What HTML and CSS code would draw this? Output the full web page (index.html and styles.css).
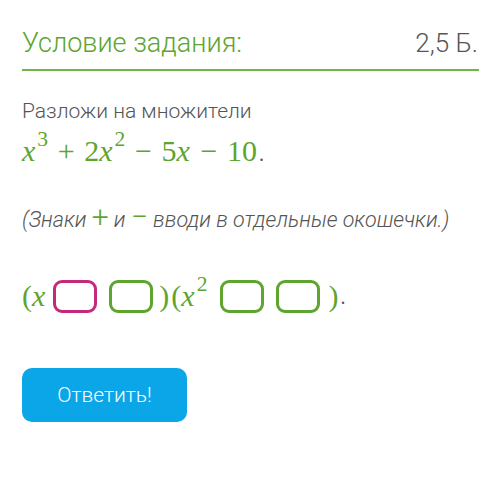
FILE: index.html
```html
<!DOCTYPE html>
<html lang="ru">
<head>
    <meta charset="UTF-8">
    <meta name="viewport" content="width=device-width, initial-scale=1.0">
    <title>Условие задания</title>
    <link rel="stylesheet" href="styles.css">
</head>
<body>
    <div class="task">
        <div class="task-header">
            <span class="task-title">Условие задания:</span>
            <span class="task-points">2,5 Б.</span>
        </div>

        <p class="task-text">Разложи на множители</p>
        <p class="formula"><i>x</i><sup>3</sup><span class="op">+</span>2<i>x</i><sup>2</sup><span class="op">&minus;</span>5<i>x</i><span class="op">&minus;</span>10<span class="dot">.</span></p>

        <p class="hint">(Знаки <span class="sign">+</span> и <span class="sign">&minus;</span> вводи в отдельные окошечки.)</p>

        <div class="answer">
            <span class="math">(<i>x</i></span>
            <span class="box active"></span>
            <span class="box"></span>
            <span class="math">)<span class="paren">(</span><i>x</i><sup>2</sup></span>
            <span class="box"></span>
            <span class="box"></span>
            <span class="math last">)</span><span class="dot">.</span>
        </div>

        <button class="submit">Ответить!</button>
    </div>
</body>
</html>
```

FILE: styles.css
```css
body {
    margin: 0;
    font-family: Roboto, "Noto Sans", sans-serif;
    color: #555;
    background: #fff;
}
.task {
    padding: 27px 21px 0 22px;
}
.task-header {
    display: flex;
    justify-content: space-between;
    align-items: baseline;
    padding-bottom: 10px;
    border-bottom: 2px solid #72b446;
    font-weight: 300;
    font-size: 27px;
}
.task-title {
    color: #5ea52f;
}
.task-points {
    color: #555;
    font-size: 26px;
    margin-right: 1px;
}
.task-text {
    margin: 28px 0 0;
    font-size: 21px;
    font-weight: 300;
}
.formula {
    margin: 10px 0 0;
    font-family: "Liberation Serif", "Times New Roman", serif;
    font-size: 30px;
    line-height: 36px;
    color: #5ea52f;
}
.formula i,
.answer i {
    margin-right: 1px;
}
.formula sup,
.answer sup {
    font-size: 0.72em;
    vertical-align: 0.68em;
    line-height: 0;
    margin-left: 1px;
}
.answer sup {
    margin-right: 6px;
}
.op {
    margin: 0 0.32em;
}
.dot {
    color: #555;
    font-family: "Liberation Serif", serif;
    font-size: 20px;
    margin-left: 2px;
}
.hint {
    margin: 35px 0 0;
    font-size: 21.5px;
    font-weight: 300;
    font-style: italic;
}
.sign {
    font-style: normal;
    font-weight: 300;
    color: #5ea52f;
    font-size: 30px;
    line-height: 0;
}
.answer {
    display: flex;
    align-items: center;
    margin-top: 47px;
    font-family: "Liberation Serif", "Times New Roman", serif;
    font-size: 30px;
    color: #5ea52f;
}
.math {
    margin-right: 7px;
}
.paren {
    margin-left: 2px;
}
.box {
    width: 38px;
    height: 27px;
    border: 3px solid #5ea52f;
    border-radius: 9px;
    margin-right: 12px;
}
.box + .math {
    margin-left: -6px;
}
.box + .math.last {
    margin-left: -4px;
    margin-right: 2px;
}
.box.active {
    border-color: #c42a7c;
}
.answer .dot {
    align-self: flex-end;
    margin-bottom: 4px;
    margin-left: 0;
}
.submit {
    margin-top: 55px;
    width: 165px;
    height: 54px;
    border: none;
    border-radius: 10px;
    background: #0aa6e8;
    color: #fff;
    font-family: Roboto, sans-serif;
    font-weight: 300;
    font-size: 21px;
    cursor: pointer;
}
```
